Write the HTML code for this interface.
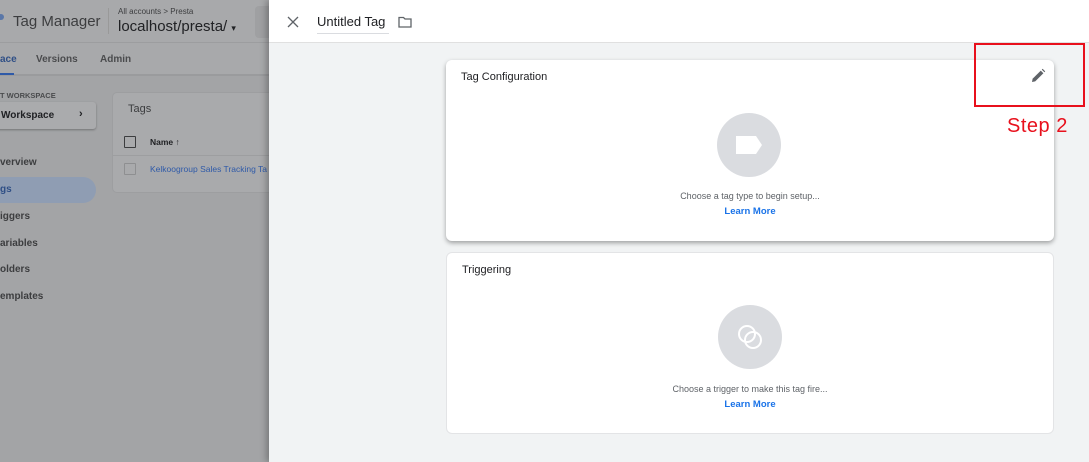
<!DOCTYPE html>
<html><head><meta charset="utf-8"><style>
*{box-sizing:border-box;margin:0;padding:0}
body{width:1089px;height:462px;overflow:hidden;position:relative;font-family:"Liberation Sans",Arial,sans-serif;background:#f1f3f4}
.left{position:absolute;left:0;top:0;width:269px;height:462px;background:#a3a4a6;overflow:hidden}
.lhead{position:absolute;left:0;top:0;width:269px;height:43px;background:#a8a9ab;border-bottom:1px solid #9c9d9f}
.ltabs{position:absolute;left:0;top:43px;width:269px;height:33px;background:#a8a9ab;border-bottom:2px solid #9a9b9d}
.t{position:absolute;white-space:nowrap}
.panel{position:absolute;left:269px;top:0;width:820px;height:462px;background:#f1f3f4;box-shadow:-3px 0 6px rgba(0,0,0,.25)}
.ph{position:absolute;left:0;top:0;width:820px;height:43px;background:#fff;border-bottom:1px solid #e0e0e0}
.card{position:absolute;left:446px;width:608px;background:#fff;border-radius:6px}
.c1{top:60px;height:181px;box-shadow:0 2px 5px rgba(0,0,0,.35)}
.c2{top:252px;height:182px;border:1px solid #e3e4e6}
.ct{position:absolute;left:15px;font-size:11px;color:#202124}
.circ{position:absolute;left:271px;width:64px;height:64px;border-radius:50%;background:#dadce0}
.msg{position:absolute;left:0;width:100%;text-align:center;font-size:9px;color:#5f6368}
.lm{position:absolute;left:0;width:100%;text-align:center;font-size:9.5px;color:#1a73e8;font-weight:bold}
</style></head><body>
<div class="left">
 <div class="lhead"></div>
 <div class="t" style="left:-2px;top:14px;width:6px;height:6px;border-radius:50%;background:#5a77a8"></div>
 <div class="t" style="left:13px;top:13px;font-size:15px;color:#3c3d3f">Tag Manager</div>
 <div class="t" style="left:108px;top:8px;width:1px;height:26px;background:#999"></div>
 <div class="t" style="left:118px;top:7px;font-size:8px;color:#3c3d3f">All accounts &gt; Presta</div>
 <div class="t" style="left:118px;top:18px;font-size:15px;color:#202124">localhost/presta/ <span style="font-size:9px">▾</span></div>
 <div class="t" style="left:255px;top:6px;width:20px;height:32px;background:#9fa0a2;border-radius:4px"></div>
 <div class="ltabs"></div>
 <div class="t" style="left:0;top:54px;font-size:10px;color:#2f4f86;font-weight:bold">ace</div>
 <div class="t" style="left:0;top:73px;width:14px;height:2px;background:#2f5aa8"></div>
 <div class="t" style="left:36px;top:54px;font-size:10px;color:#4a4b4d;font-weight:bold">Versions</div>
 <div class="t" style="left:100px;top:54px;font-size:10px;color:#4a4b4d;font-weight:bold">Admin</div>
 <div class="t" style="left:0;top:91px;font-size:7.5px;color:#4a4b4d;font-weight:bold">T WORKSPACE</div>
 <div class="t" style="left:-6px;top:102px;width:102px;height:27px;background:#aaabad;border-radius:3px;box-shadow:0 1px 2px rgba(0,0,0,.3)"></div>
 <div class="t" style="left:1px;top:110px;font-size:10px;color:#202124;font-weight:bold">Workspace</div>
 <div class="t" style="left:79px;top:108px;font-size:11px;color:#202124;font-weight:bold">›</div>
 <div class="t" style="left:112px;top:92px;width:170px;height:101px;background:#a9aaac;border-radius:5px;border:1px solid #9d9ea0"></div>
 <div class="t" style="left:128px;top:103px;font-size:11px;color:#3c3d3f">Tags</div>
 <div class="t" style="left:124px;top:136px;width:12px;height:12px;border:1.5px solid #3c3d3f;border-radius:1px"></div>
 <div class="t" style="left:150px;top:137px;font-size:8.5px;color:#202124;font-weight:bold">Name ↑</div>
 <div class="t" style="left:112px;top:155px;width:160px;height:1px;background:#9d9ea0"></div>
 <div class="t" style="left:124px;top:163px;width:12px;height:12px;border:1px solid #8e8f91;border-radius:1px"></div>
 <div class="t" style="left:150px;top:164px;font-size:8.5px;color:#2f5aa8">Kelkoogroup Sales Tracking Ta</div>
 <div class="t" style="left:-20px;top:177px;width:116px;height:26px;background:#8f9db3;border-radius:13px"></div>
 <div class="t" style="left:0;top:157px;font-size:10px;color:#3c3d3f;font-weight:bold">verview</div>
 <div class="t" style="left:0;top:184px;font-size:10px;color:#2f4f86;font-weight:bold">gs</div>
 <div class="t" style="left:0;top:211px;font-size:10px;color:#3c3d3f;font-weight:bold">iggers</div>
 <div class="t" style="left:0;top:238px;font-size:10px;color:#3c3d3f;font-weight:bold">ariables</div>
 <div class="t" style="left:0;top:264px;font-size:10px;color:#3c3d3f;font-weight:bold">olders</div>
 <div class="t" style="left:0;top:291px;font-size:10px;color:#3c3d3f;font-weight:bold">emplates</div>
</div>
<div class="panel"><div class="ph"></div></div>
<svg class="t" style="left:287px;top:16px" width="12" height="12" viewBox="0 0 12 12"><path d="M1 1L11 11M11 1L1 11" stroke="#5f6368" stroke-width="1.3"/></svg>
<div class="t" style="left:317px;top:14px;font-size:13px;color:#202124">Untitled Tag</div>
<div class="t" style="left:317px;top:33px;width:72px;height:1px;background:#dadce0"></div>
<svg class="t" style="left:398px;top:16px" width="14" height="12" viewBox="0 0 14 12"><path d="M1 1.5H5.5L7 3H13V11H1Z" fill="none" stroke="#5f6368" stroke-width="1.3"/></svg>
<div class="card c1">
 <div class="ct" style="top:11px">Tag Configuration</div>
 <svg class="t" style="left:584px;top:8px" width="16" height="16" viewBox="0 0 16 16"><path d="M2 14L2.6 10.8L10.8 2.6L13.4 5.2L5.2 13.4Z" fill="#5f6368"/><path d="M11.8 1.6L12.6 0.8L15.2 3.4L14.4 4.2Z" fill="#5f6368"/></svg>
 <div class="circ" style="top:53px"><svg style="position:absolute;left:19px;top:23px" width="27" height="18" viewBox="0 0 27 18"><path d="M0 0H20L26 9L20 18H0Z" fill="#fff"/></svg></div>
 <div class="msg" style="top:131px">Choose a tag type to begin setup...</div>
 <div class="lm" style="top:146px">Learn More</div>
</div>
<div class="card c2">
 <div class="ct" style="top:11px">Triggering</div>
 <div class="circ" style="top:52px"><svg style="position:absolute;left:16px;top:16px" width="32" height="32" viewBox="0 0 32 32"><circle cx="13" cy="13" r="8" fill="none" stroke="#fff" stroke-width="2"/><circle cx="19" cy="19" r="8" fill="none" stroke="#fff" stroke-width="2"/></svg></div>
 <div class="msg" style="top:131px">Choose a trigger to make this tag fire...</div>
 <div class="lm" style="top:146px">Learn More</div>
</div>
<div class="t" style="left:974px;top:43px;width:111px;height:64px;border:2px solid #e8101c"></div>
<div class="t" style="left:1007px;top:115px;font-size:20px;color:#e8101c;letter-spacing:0.5px">Step 2</div>
</body></html>
